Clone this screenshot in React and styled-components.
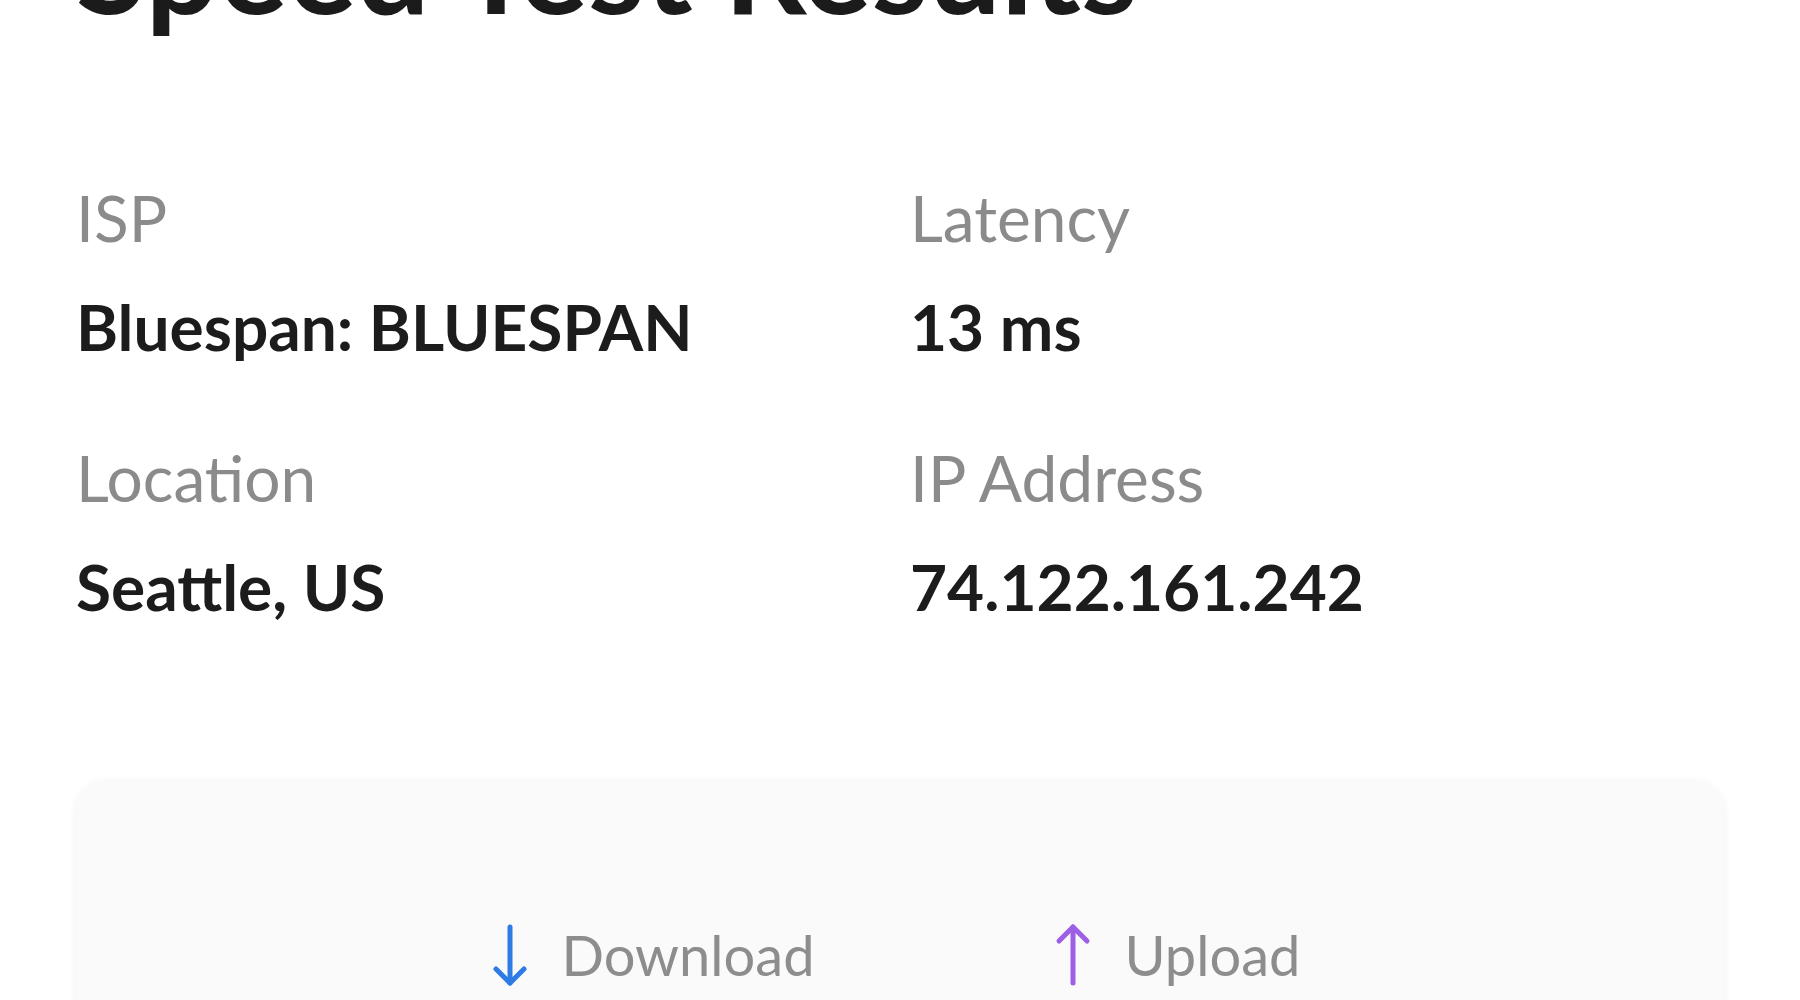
import React from "react";
import styled, { createGlobalStyle } from "styled-components";

const Global = createGlobalStyle`
  html, body { margin: 0; padding: 0; background: #ffffff; }
  body { font-family: Lato, "Open Sans", sans-serif; overflow: hidden; }
`;

const Page = styled.div`
  width: 1800px;
  height: 1000px;
  overflow: hidden;
  box-sizing: border-box;
  padding-left: 76px;
`;

const Title = styled.h1`
  margin: -100px 0 0 0;
  font-family: Lato, sans-serif;
  font-weight: 700;
  font-size: 129px;
  line-height: 1;
  color: #1b1b1b;
  letter-spacing: 0;
  white-space: nowrap;
`;

const InfoGrid = styled.div`
  display: grid;
  grid-template-columns: 834px 1fr;
  row-gap: 87px;
  margin-top: 157px;
`;

const Item = styled.div`
  display: flex;
  flex-direction: column;
  gap: 45px;
`;

const Label = styled.div`
  font-size: 64px;
  line-height: 1;
  font-weight: 400;
  color: #8b8b8b;
`;

const Value = styled.div`
  font-size: 64px;
  line-height: 1;
  font-weight: 700;
  color: #1c1c1c;
`;

const Card = styled.div`
  margin: 160px 0 0 -3px;
  width: 1654px;
  height: 300px;
  border-radius: 34px;
  background: #fafafa;
  box-shadow: 0 0 6px rgba(0, 0, 0, 0.03);
  display: flex;
  flex-direction: column;
  align-items: center;
  padding-top: 144px;
  box-sizing: border-box;
`;

const Legend = styled.div`
  display: flex;
  align-items: center;
  gap: 238px;
  margin-left: -10px;
`;

const LegendItem = styled.div`
  display: flex;
  align-items: center;
  gap: 32px;
  font-size: 56px;
  line-height: 1;
  color: #8d8d8d;
`;

const Arrow = ({ color, up }) => (
  <svg width="40" height="64" viewBox="0 0 40 64" fill="none">
    {up ? (
      <g stroke={color} strokeWidth="5" strokeLinecap="round" strokeLinejoin="round">
        <line x1="20" y1="4" x2="20" y2="60" />
        <polyline points="6,18 20,4 34,18" />
      </g>
    ) : (
      <g stroke={color} strokeWidth="5" strokeLinecap="round" strokeLinejoin="round">
        <line x1="20" y1="4" x2="20" y2="60" />
        <polyline points="6,46 20,60 34,46" />
      </g>
    )}
  </svg>
);

export default function App() {
  return (
    <Page>
      <Global />
      <Title>Speed Test Results</Title>
      <InfoGrid>
        <Item>
          <Label>ISP</Label>
          <Value>Bluespan: BLUESPAN</Value>
        </Item>
        <Item>
          <Label>Latency</Label>
          <Value>13 ms</Value>
        </Item>
        <Item>
          <Label>Location</Label>
          <Value>Seattle, US</Value>
        </Item>
        <Item>
          <Label>IP Address</Label>
          <Value>74.122.161.242</Value>
        </Item>
      </InfoGrid>
      <Card>
        <Legend>
          <LegendItem>
            <Arrow color="#2f7be6" />
            Download
          </LegendItem>
          <LegendItem>
            <Arrow color="#9c5fe6" up />
            Upload
          </LegendItem>
        </Legend>
      </Card>
    </Page>
  );
}
